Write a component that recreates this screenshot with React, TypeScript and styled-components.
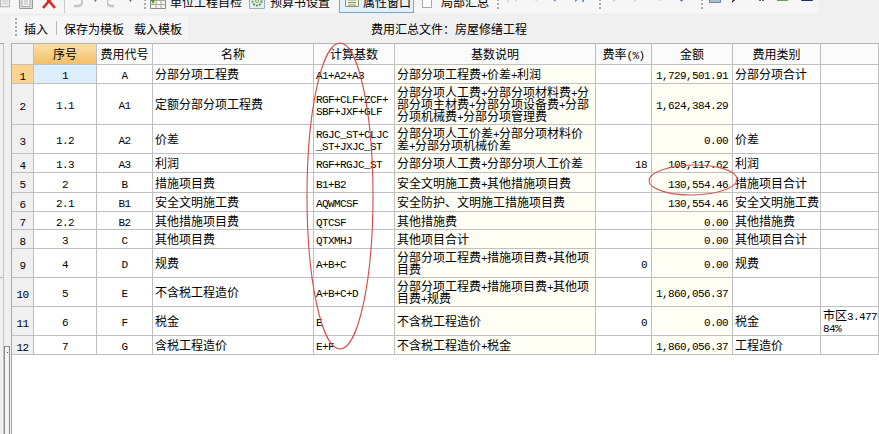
import React from "react";
import styled, { createGlobalStyle } from "styled-components";

const GlobalStyle = createGlobalStyle`
  html, body {
    margin: 0;
    padding: 0;
    overflow: hidden;
    background: #f0f0f0;
  }
`;

const Page = styled.div`
  position: relative;
  width: 879px;
  height: 434px;
  overflow: hidden;
  background: #f0f0f0;
  color: #000;
  font: 12px "Noto Sans CJK SC", "Liberation Sans", sans-serif;
`;

/* top toolbar, cut off by the window edge */
const Strip = styled.div`
  display: flex;
  align-items: flex-end;
  height: 13px;
  overflow: hidden;
`;

const Group = styled.div<{ $w: number }>`
  display: flex;
  align-items: flex-end;
  flex: none;
  width: ${(p) => p.$w}px;
  height: 24px;
  background: #f6f6f6;
`;

const Tool = styled.div<{ $w: number; $ml?: number }>`
  display: flex;
  align-items: center;
  justify-content: center;
  flex: none;
  width: ${(p) => p.$w}px;
  height: 24px;
  margin-left: ${(p) => p.$ml ?? 0}px;
  white-space: nowrap;
`;

const ActiveTool = styled(Tool)`
  box-sizing: border-box;
  justify-content: flex-start;
  gap: 4px;
  padding-left: 5px;
  border: 1px solid #6fa8d4;
  background: #e4f0fa;
`;

const Check = styled.div`
  box-sizing: border-box;
  width: 10px;
  height: 13px;
  border: 1px solid #a8a8a8;
  background: #fff;
`;

const Sep = styled.div`
  width: 1px;
  height: 24px;
  background: #c8c8c8;
`;

const Grip = styled.div`
  width: 2px;
  height: 20px;
  background: repeating-linear-gradient(to bottom, #aaa 0 2px, transparent 2px 4px);
`;

/* second toolbar */
const SubBar = styled.div`
  display: flex;
  align-items: center;
  box-sizing: border-box;
  height: 30px;
  padding: 3px 0 3px 12px;
`;

const TemplateBar = styled.div`
  display: flex;
  align-items: center;
  flex: none;
  width: 176px;
  height: 24px;
  background: #f6f6f6;
`;

const TemplateItem = styled.span<{ $ml: number }>`
  margin-left: ${(p) => p.$ml}px;
  white-space: nowrap;
`;

const TemplateSep = styled.div`
  width: 1px;
  height: 14px;
  margin-left: 8px;
  background: #b8b8b8;
`;

const FileLabel = styled.div`
  margin-left: 183px;
  white-space: nowrap;
`;

/* main area */
const Body = styled.div`
  display: flex;
  height: 391px;
`;

const Rail = styled.div`
  display: flex;
  flex: none;
  width: 11px;
`;

const SidePanel = styled.div`
  box-sizing: border-box;
  flex: none;
  width: 4px;
  height: 100%;
  border-top: 1px solid #a8a8a8;
  border-right: 1px solid #c4c4c4;
`;

const SideSection = styled.div`
  height: 233px;
  border-bottom: 1px solid #b4b4b4;
`;

const Track = styled.div`
  display: flex;
  flex-direction: column;
  justify-content: flex-end;
  flex: none;
  width: 7px;
`;

const Thumb = styled.div`
  box-sizing: border-box;
  height: 88px;
  width: 6px;
  padding: 5px 0 0 2px;
  border: 1px solid #8c8c8c;
  border-bottom: 0;
  background: #f4f4f4;
`;

const ThumbDot = styled.div`
  width: 1px;
  height: 1px;
  background: #555;
`;

const GridWrap = styled.div`
  flex: 1;
  min-width: 0;
  overflow: hidden;
  background: #fff;
  border-left: 1px solid #a8a8a8;
`;

const Table = styled.table`
  width: 867px;
  table-layout: fixed;
  border-collapse: separate;
  border-spacing: 0;
`;

const Col = styled.col<{ $w: number }>`
  width: ${(p) => p.$w}px;
`;

const Row = styled.tr<{ $h: number }>`
  height: ${(p) => p.$h}px;
`;

const HeadCell = styled.th<{ $active?: boolean; $corner?: boolean }>`
  box-sizing: border-box;
  padding: 0;
  font-weight: 400;
  line-height: 12px;
  text-align: center;
  white-space: nowrap;
  border-top: 1px solid #b4b4b4;
  border-right: 1px solid #c0c0c0;
  border-bottom: 1px solid #c0c0c0;
  background: ${(p) =>
    p.$active
      ? "linear-gradient(to bottom, #fbdfa6, #f1bf68)"
      : p.$corner
        ? "#f0f0f0"
        : "#fbfbfb"};
`;

const RowHead = styled.td<{ $active: boolean }>`
  box-sizing: border-box;
  padding: 0;
  text-align: center;
  border-right: 1px solid #c0c0c0;
  border-bottom: 1px solid #c0c0c0;
  background: ${(p) => (p.$active ? "#fbd491" : "#f0f0f0")};
`;

const Cell = styled.td<{ $align?: string; $cream?: boolean; $selected?: boolean }>`
  box-sizing: border-box;
  padding: ${(p) => (p.$align === "right" ? "0 4px 0 0" : p.$align === "center" ? "0" : "0 0 0 2px")};
  overflow: hidden;
  line-height: 12px;
  white-space: nowrap;
  text-align: ${(p) => p.$align ?? "left"};
  border-right: 1px solid #c0c0c0;
  border-bottom: 1px solid #c0c0c0;
  background: ${(p) => (p.$selected ? "#dcedfc" : p.$cream ? "#fffef4" : "#fff")};
`;

const Latin = styled.span`
  font: 11px/12px "Liberation Mono", "DejaVu Sans Mono", monospace;
  letter-spacing: -0.6px;
`;

const Line = styled.div`
  height: 12px;
`;

const Marks = styled.svg`
  position: absolute;
  top: 0;
  left: 0;
  pointer-events: none;
`;

/* bits of text: latin runs are narrow, half a CJK glyph wide */
const Mixed = ({ text }: { text: string }) => (
  <>
    {text.split("\n").map((line, i) => (
      <Line key={i}>
        {line.split(/([\x20-\x7e]+)/).map((part, j) =>
          /^[\x20-\x7e]+$/.test(part) ? <Latin key={j}>{part}</Latin> : part,
        )}
      </Line>
    ))}
  </>
);

const Doc = () => (
  <svg width="13" height="16" viewBox="0 0 13 16">
    <path d="M.5.5h12v15H.5z" fill="#eee" stroke="#9a9a9a" />
    <path d="M3 5h7M3 8h7M3 11h7" stroke="#b8b8b8" />
  </svg>
);

const Clip = () => (
  <svg width="14" height="16" viewBox="0 0 14 16">
    <path d="M.5 1.5h13v14H.5z" fill="#ddd" stroke="#999" />
    <path d="M3 4.5h8v9H3z" fill="#f4f4f4" stroke="#aaa" />
    <path d="M5 7h4M5 9h4M5 11h4" stroke="#bbb" />
  </svg>
);

const RedX = () => (
  <svg width="14" height="16" viewBox="0 0 14 16">
    <path d="M1 1l12 14M13 1L1 15" stroke="#d8281f" strokeWidth="2.6" fill="none" />
  </svg>
);

const Undo = () => (
  <svg width="13" height="16" viewBox="0 0 13 16">
    <path d="M2 4h6a4 4 0 010 9H4" stroke="#c4c4c4" strokeWidth="2.4" fill="none" />
  </svg>
);

const Redo = () => (
  <svg width="11" height="16" viewBox="0 0 11 16">
    <path d="M10 4H4a3.500 4 0 000 9h3" stroke="#c4c4c4" strokeWidth="2.4" fill="none" />
  </svg>
);

const Down = () => (
  <svg width="5" height="16" viewBox="0 0 5 16">
    <path d="M0 5h5L2.500 9z" fill="#666" />
  </svg>
);

const TableCheck = () => (
  <svg width="16" height="16" viewBox="0 0 16 16">
    <path d="M.5 3.500h15v12H.5z" fill="#f4f4e8" stroke="#8a8a7a" />
    <path d="M.5 7.500h15M.5 11.500h15M6 3.500v12M11 3.500v12" stroke="#a8a898" />
    <path d="M1 6l2 3 3-7" stroke="#3aa02c" strokeWidth="1.800" fill="none" />
  </svg>
);

const Gear = () => (
  <svg width="16" height="16" viewBox="0 0 16 16">
    <path d="M.5.5h15v15H.5z" fill="#e6f0f8" stroke="#8fb0cc" />
    <circle cx="8" cy="8" r="4.500" fill="none" stroke="#6b9a3c" strokeWidth="2" strokeDasharray="2 1" />
    <circle cx="8" cy="8" r="1.500" fill="#eef5e4" stroke="#7aa64a" />
  </svg>
);

const ListPane = () => (
  <svg width="14" height="16" viewBox="0 0 14 16">
    <path d="M.5 1.500h13v12H.5z" fill="#f4f4e4" stroke="#8a9a78" />
    <path d="M3 4.500h8M3 7h8M3 9.500h8M3 12h8" stroke="#7c9a5c" />
  </svg>
);

const Nav = ({ back, color }: { back?: boolean; color: string }) => (
  <svg width="10" height="16" viewBox="0 0 10 16">
    <path d={back ? "M9 0v9L1 4z" : "M1 0v9l8-5z"} fill={color} />
  </svg>
);

const NavEnd = ({ back, color }: { back?: boolean; color: string }) => (
  <svg width="10" height="16" viewBox="0 0 10 16">
    <path d={back ? "M0 0h2v9H0zM10 0v9L3 4z" : "M0 0v9l7-5zM8 0h2v9H8z"} fill={color} />
  </svg>
);

const Vert = ({ up, color }: { up?: boolean; color: string }) => (
  <svg width="12" height="16" viewBox="0 0 12 16">
    <path d={up ? "M4 8V3h4v5zM0 3h12L6 -3z" : "M4 0h4v3h4L6 9 0 3h4z"} fill={color} />
  </svg>
);

const Calc = () => (
  <svg width="12" height="16" viewBox="0 0 12 16">
    <path d="M.5 0h11v9.500H.5z" fill="#a6bcd8" stroke="#6f88a8" />
    <path d="M2 2h1M5 2h1M8 2h1M2 5h1M5 5h1M8 5h1" stroke="#34507a" />
  </svg>
);

const Pin = () => (
  <svg width="12" height="16" viewBox="0 0 12 16">
    <path d="M0 9l5-5" stroke="#222" strokeWidth="1.500" />
    <path d="M4 2l6 0 -2 4-3 1z" fill="#222" />
  </svg>
);

const Pilcrow = () => (
  <svg width="8" height="16" viewBox="0 0 8 16">
    <path d="M0 0h8M4 0v8M7 0v8" stroke="#111" strokeWidth="1.300" />
    <path d="M0 0h4v3H1z" fill="#111" />
  </svg>
);

const GreenBox = () => (
  <svg width="14" height="16" viewBox="0 0 14 16">
    <path d="M0 0h10v8H0z" fill="#62a83c" />
    <path d="M10 0h4v5l-4 3z" fill="#2f6e20" />
  </svg>
);

const ListIcon = () => (
  <svg width="12" height="16" viewBox="0 0 12 16">
    <path d="M.5 0h11v7.500H.5z" fill="#fff" stroke="#1c2c78" />
    <path d="M2 2h8M2 4h8M2 6h8" stroke="#1c2c78" />
  </svg>
);

const columns = [22, 63, 56, 161, 81, 201, 56, 81, 88, 58];

const headers = ["序号", "费用代号", "名称", "计算基数", "基数说明", "费率(%)", "金额", "费用类别", ""];

const rows = [
  { h: 19, no: "1", code: "A", name: "分部分项工程费", base: "A1+A2+A3", desc: "分部分项工程费+价差+利润", rate: "", amount: "1,729,501.91", kind: "分部分项合计" },
  { h: 41, no: "1.1", code: "A1", name: "定额分部分项工程费", base: "RGF+CLF+ZCF+\nSBF+JXF+GLF", desc: "分部分项人工费+分部分项材料费+分\n部分项主材费+分部分项设备费+分部\n分项机械费+分部分项管理费", rate: "", amount: "1,624,384.29", kind: "" },
  { h: 29, no: "1.2", code: "A2", name: "价差", base: "RGJC_ST+CLJC\n_ST+JXJC_ST", desc: "分部分项人工价差+分部分项材料价\n差+分部分项机械价差", rate: "", amount: "0.00", kind: "价差" },
  { h: 19, no: "1.3", code: "A3", name: "利润", base: "RGF+RGJC_ST", desc: "分部分项人工费+分部分项人工价差", rate: "18", amount: "105,117.62", kind: "利润" },
  { h: 20, no: "2", code: "B", name: "措施项目费", base: "B1+B2", desc: "安全文明施工费+其他措施项目费", rate: "", amount: "130,554.46", kind: "措施项目合计" },
  { h: 19, no: "2.1", code: "B1", name: "安全文明施工费", base: "AQWMCSF", desc: "安全防护、文明施工措施项目费", rate: "", amount: "130,554.46", kind: "安全文明施工费" },
  { h: 18, no: "2.2", code: "B2", name: "其他措施项目费", base: "QTCSF", desc: "其他措施费", rate: "", amount: "0.00", kind: "其他措施费" },
  { h: 19, no: "3", code: "C", name: "其他项目费", base: "QTXMHJ", desc: "其他项目合计", rate: "", amount: "0.00", kind: "其他项目合计" },
  { h: 29, no: "4", code: "D", name: "规费", base: "A+B+C", desc: "分部分项工程费+措施项目费+其他项\n目费", rate: "0", amount: "0.00", kind: "规费" },
  { h: 29, no: "5", code: "E", name: "不含税工程造价", base: "A+B+C+D", desc: "分部分项工程费+措施项目费+其他项\n目费+规费", rate: "", amount: "1,860,056.37", kind: "" },
  { h: 29, no: "6", code: "F", name: "税金", base: "E", desc: "不含税工程造价", rate: "0", amount: "0.00", kind: "税金", note: "市区3.4779\n84%" },
  { h: 19, no: "7", code: "G", name: "含税工程造价", base: "E+F", desc: "不含税工程造价+税金", rate: "", amount: "1,860,056.37", kind: "工程造价" },
];

const App = () => {
  return (
    <Page>
      <GlobalStyle />
      <Strip>
        <Group $w={493}>
          <Tool $w={10}><Doc /></Tool>
          <Tool $ml={9} $w={14}><Clip /></Tool>
          <Tool $ml={9} $w={14}><RedX /></Tool>
          <Tool $ml={8} $w={1}><Sep /></Tool>
          <Tool $ml={5} $w={13}><Undo /></Tool>
          <Tool $ml={10} $w={5}><Down /></Tool>
          <Tool $ml={9} $w={11}><Redo /></Tool>
          <Tool $ml={10} $w={5}><Down /></Tool>
          <Tool $ml={10} $w={3}><Grip /></Tool>
          <Tool $ml={4} $w={16}><TableCheck /></Tool>
          <Tool $ml={4} $w={72}>单位工程自检</Tool>
          <Tool $ml={7} $w={16}><Gear /></Tool>
          <Tool $ml={5} $w={60}>预算书设置</Tool>
          <ActiveTool $ml={9} $w={75}><ListPane />属性窗口</ActiveTool>
          <Tool $ml={8} $w={10}><Check /></Tool>
          <Tool $ml={9} $w={48}>局部汇总</Tool>
        </Group>
        <Group $w={101}>
          <Tool $ml={3} $w={3}><Grip /></Tool>
          <Tool $ml={8} $w={10}><NavEnd back color="#d8d8d8" /></Tool>
          <Tool $ml={13} $w={8}><Nav back color="#d8d8d8" /></Tool>
          <Tool $ml={15} $w={8}><Nav color="#5b8fd8" /></Tool>
          <Tool $ml={14} $w={9}><NavEnd color="#5b8fd8" /></Tool>
        </Group>
        <Group $w={103}>
          <Tool $ml={4} $w={3}><Grip /></Tool>
          <Tool $ml={7} $w={12}><Vert color="#d4d4d4" /></Tool>
          <Tool $ml={10} $w={10}><Vert color="#d4d4d4" /></Tool>
          <Tool $ml={16} $w={8}><Vert up color="#d4d4d4" /></Tool>
          <Tool $ml={13} $w={9}><Vert color="#3c78d0" /></Tool>
        </Group>
        <Group $w={121}>
          <Tool $ml={3} $w={3}><Grip /></Tool>
          <Tool $ml={6} $w={12}><Calc /></Tool>
          <Tool $ml={11} $w={12}><Pin /></Tool>
          <Tool $ml={12} $w={8}><Pilcrow /></Tool>
          <Tool $ml={13} $w={14}><GreenBox /></Tool>
          <Tool $ml={10} $w={12}><ListIcon /></Tool>
        </Group>
      </Strip>

      <SubBar>
        <TemplateBar>
          <TemplateItem $ml={3}><Grip /></TemplateItem>
          <TemplateItem $ml={7}>插入</TemplateItem>
          <TemplateSep />
          <TemplateItem $ml={7}>保存为模板</TemplateItem>
          <TemplateItem $ml={10}>载入模板</TemplateItem>
        </TemplateBar>
        <FileLabel>费用汇总文件：房屋修缮工程</FileLabel>
      </SubBar>

      <Body>
        <Rail>
          <SidePanel>
            <SideSection />
          </SidePanel>
          <Track>
            <Thumb>
              <ThumbDot />
            </Thumb>
          </Track>
        </Rail>
        <GridWrap>
          <Table>
            <colgroup>
              {columns.map((w, i) => (
                <Col key={i} $w={w} />
              ))}
            </colgroup>
            <thead>
              <Row $h={22}>
                <HeadCell $corner />
                {headers.map((label, i) => (
                  <HeadCell key={i} $active={i === 0}>
                    <Mixed text={label} />
                  </HeadCell>
                ))}
              </Row>
            </thead>
            <tbody>
              {rows.map((row, i) => (
                <Row key={i} $h={row.h}>
                  <RowHead $active={i === 0}>
                    <Latin>{i + 1}</Latin>
                  </RowHead>
                  <Cell $align="center" $selected={i === 0}><Mixed text={row.no} /></Cell>
                  <Cell $align="center"><Mixed text={row.code} /></Cell>
                  <Cell><Mixed text={row.name} /></Cell>
                  <Cell><Mixed text={row.base} /></Cell>
                  <Cell $cream><Mixed text={row.desc} /></Cell>
                  <Cell $align="right"><Mixed text={row.rate} /></Cell>
                  <Cell $align="right" $cream><Mixed text={row.amount} /></Cell>
                  <Cell><Mixed text={row.kind} /></Cell>
                  <Cell><Mixed text={row.note ?? ""} /></Cell>
                </Row>
              ))}
            </tbody>
          </Table>
        </GridWrap>
      </Body>

      {/* red hand-drawn marks on top of the grid */}
      <Marks width="879" height="434" viewBox="0 0 879 434" fill="none">
        <ellipse cx="340" cy="196" rx="33" ry="153" stroke="#d8474a" strokeWidth="1.100" />
        <ellipse cx="693" cy="180" rx="44" ry="15" stroke="#d4585a" strokeWidth="1.100" transform="rotate(-1 693 180)" />
      </Marks>
    </Page>
  );
};

export default App;
